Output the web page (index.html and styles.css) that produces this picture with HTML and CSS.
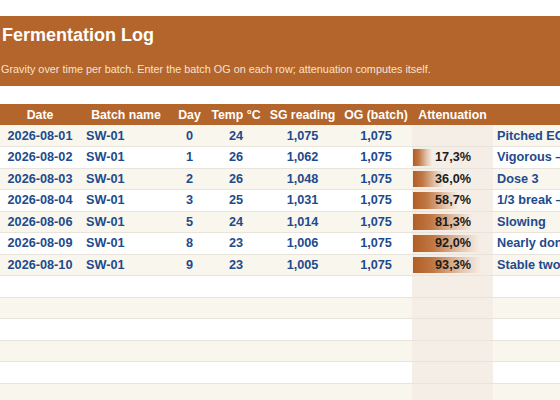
FILE: index.html
```html
<!DOCTYPE html>
<html lang="en">

<head>
    <meta charset="UTF-8">
    <meta name="viewport" content="width=device-width, initial-scale=1.0">
    <title>Fermentation Log</title>
    <link rel="stylesheet" href="styles.css">
</head>

<body>
    <div class="banner">
        <h1>Fermentation Log</h1>
        <p>Gravity over time per batch. Enter the batch OG on each row; attenuation computes itself.</p>
    </div>
    <div class="sheet">
        <table class="log">
            <colgroup>
                <col class="c-date">
                <col class="c-batch">
                <col class="c-day">
                <col class="c-temp">
                <col class="c-sg">
                <col class="c-og">
                <col class="c-att">
                <col class="c-notes">
            </colgroup>
            <thead>
                <tr>
                    <th>Date</th>
                    <th>Batch name</th>
                    <th>Day</th>
                    <th>Temp °C</th>
                    <th>SG reading</th>
                    <th>OG (batch)</th>
                    <th>Attenuation</th>
                    <th></th>
                </tr>
            </thead>
            <tbody>
                <tr>
                    <td class="mid">2026-08-01</td>
                    <td>SW-01</td>
                    <td class="mid">0</td>
                    <td class="mid">24</td>
                    <td class="mid">1,075</td>
                    <td class="mid">1,075</td>
                    <td class="att"></td>
                    <td class="note">Pitched EC-1118, nutrient dose 1</td>
                </tr>
                <tr>
                    <td class="mid">2026-08-02</td>
                    <td>SW-01</td>
                    <td class="mid">1</td>
                    <td class="mid">26</td>
                    <td class="mid">1,062</td>
                    <td class="mid">1,075</td>
                    <td class="att"><span class="bar" style="width: 19px"></span><span class="pct">17,3%</span></td>
                    <td class="note">Vigorous – dose 2</td>
                </tr>
                <tr>
                    <td class="mid">2026-08-03</td>
                    <td>SW-01</td>
                    <td class="mid">2</td>
                    <td class="mid">26</td>
                    <td class="mid">1,048</td>
                    <td class="mid">1,075</td>
                    <td class="att"><span class="bar" style="width: 31px"></span><span class="pct">36,0%</span></td>
                    <td class="note">Dose 3</td>
                </tr>
                <tr>
                    <td class="mid">2026-08-04</td>
                    <td>SW-01</td>
                    <td class="mid">3</td>
                    <td class="mid">25</td>
                    <td class="mid">1,031</td>
                    <td class="mid">1,075</td>
                    <td class="att"><span class="bar" style="width: 45px"></span><span class="pct">58,7%</span></td>
                    <td class="note">1/3 break – dose 4</td>
                </tr>
                <tr>
                    <td class="mid">2026-08-06</td>
                    <td>SW-01</td>
                    <td class="mid">5</td>
                    <td class="mid">24</td>
                    <td class="mid">1,014</td>
                    <td class="mid">1,075</td>
                    <td class="att"><span class="bar" style="width: 59px"></span><span class="pct">81,3%</span></td>
                    <td class="note">Slowing</td>
                </tr>
                <tr>
                    <td class="mid">2026-08-09</td>
                    <td>SW-01</td>
                    <td class="mid">8</td>
                    <td class="mid">23</td>
                    <td class="mid">1,006</td>
                    <td class="mid">1,075</td>
                    <td class="att"><span class="bar" style="width: 66px"></span><span class="pct">92,0%</span></td>
                    <td class="note">Nearly done</td>
                </tr>
                <tr>
                    <td class="mid">2026-08-10</td>
                    <td>SW-01</td>
                    <td class="mid">9</td>
                    <td class="mid">23</td>
                    <td class="mid">1,005</td>
                    <td class="mid">1,075</td>
                    <td class="att"><span class="bar" style="width: 67px"></span><span class="pct">93,3%</span></td>
                    <td class="note">Stable two days, rack</td>
                </tr>
                <tr class="empty"><td></td><td></td><td></td><td></td><td></td><td></td><td class="att"></td><td></td></tr>
                <tr class="empty"><td></td><td></td><td></td><td></td><td></td><td></td><td class="att"></td><td></td></tr>
                <tr class="empty"><td></td><td></td><td></td><td></td><td></td><td></td><td class="att"></td><td></td></tr>
                <tr class="empty"><td></td><td></td><td></td><td></td><td></td><td></td><td class="att"></td><td></td></tr>
                <tr class="empty"><td></td><td></td><td></td><td></td><td></td><td></td><td class="att"></td><td></td></tr>
                <tr class="empty"><td></td><td></td><td></td><td></td><td></td><td></td><td class="att"></td><td></td></tr>
            </tbody>
        </table>
    </div>
</body>

</html>
```

FILE: styles.css
```css
* {
    box-sizing: border-box;
}

html,
body {
    margin: 0;
    overflow: hidden;
}

body {
    width: 560px;
    height: 400px;
    background: #fff;
    font-family: "Liberation Sans", Arial, sans-serif;
}

.banner {
    margin-top: 16px;
    height: 70px;
    padding-top: 8px;
    background: #b4652b;
    color: #fff;
}

.banner h1 {
    margin: 0;
    padding-left: 2px;
    font-size: 18px;
    line-height: 22px;
}

.banner p {
    margin: 16px 0 0;
    padding-left: 1px;
    font-size: 10.85px;
    line-height: 14px;
    color: #f6e2cc;
}

.sheet {
    margin-top: 18px;
    width: 560px;
    overflow: hidden;
}

.log {
    width: 660px;
    table-layout: fixed;
    border-collapse: collapse;
    font-size: 12.7px;
    font-weight: bold;
}

.c-date { width: 80px; }
.c-batch { width: 92px; }
.c-day { width: 35px; }
.c-temp { width: 58px; }
.c-sg { width: 75px; }
.c-og { width: 72px; }
.c-att { width: 81px; }
.c-notes { width: 167px; }

.log th {
    height: 21px;
    padding: 0;
    background: #b4652b;
    color: #fff;
    font-size: 12.3px;
    font-weight: bold;
    text-align: center;
    white-space: nowrap;
}

.log td {
    height: 21.5px;
    padding: 0 6px;
    color: #1d4b8c;
    border-bottom: 1px solid #e8e4dc;
    white-space: nowrap;
    overflow: hidden;
}

.log tbody tr:nth-child(odd) td {
    background: #f9f6ee;
}

.log td.mid {
    text-align: center;
    padding: 0;
}

.log td.att,
.log tbody tr:nth-child(odd) td.att {
    position: relative;
    padding: 0 22px 0 0;
    text-align: right;
    background: #f5eee7;
    color: #1c1c1c;
}

.log td.note {
    padding-left: 4px;
}

.bar {
    position: absolute;
    left: 1px;
    top: 2px;
    bottom: 2px;
    background: linear-gradient(90deg, #b15e26 0%, #c07743 30%, #e3c5ae 72%, #f6ece3 100%);
}

.pct {
    position: relative;
}
```
